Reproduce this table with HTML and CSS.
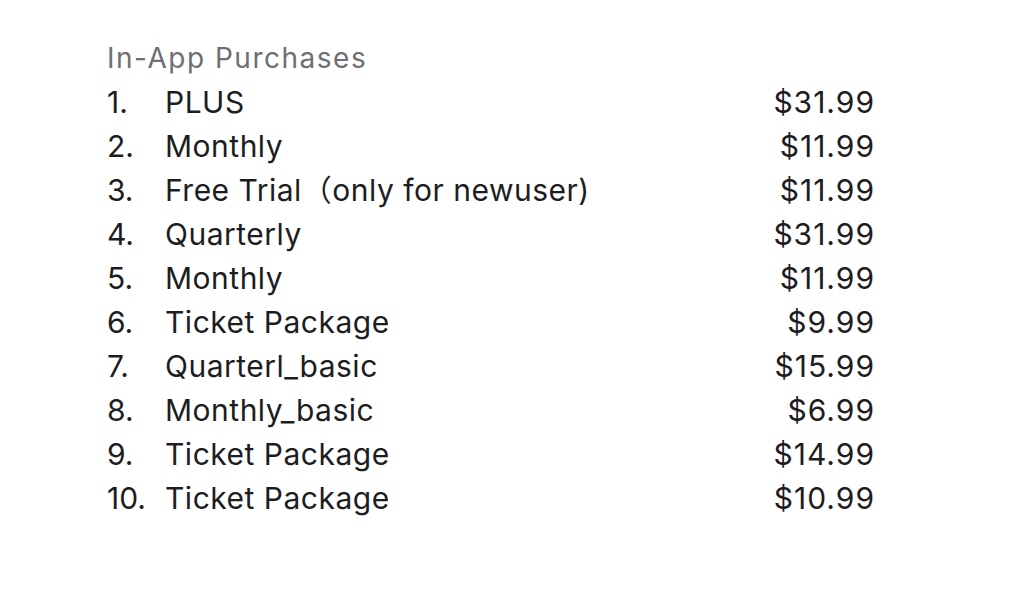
FILE: index.html
```html
<!DOCTYPE html>
<html>
<head>
<meta charset="utf-8">
<link rel="stylesheet" href="styles.css">
</head>
<body>
<div class="panel">
  <div class="title">In-App Purchases</div>
  <ol class="list">
    <li class="row"><span class="num">1.</span><span class="name">PLUS</span><span class="price">$31.99</span></li>
    <li class="row"><span class="num">2.</span><span class="name">Monthly</span><span class="price">$11.99</span></li>
    <li class="row"><span class="num">3.</span><span class="name">Free Trial（only for newuser)</span><span class="price">$11.99</span></li>
    <li class="row"><span class="num">4.</span><span class="name">Quarterly</span><span class="price">$31.99</span></li>
    <li class="row"><span class="num">5.</span><span class="name">Monthly</span><span class="price">$11.99</span></li>
    <li class="row"><span class="num">6.</span><span class="name">Ticket Package</span><span class="price">$9.99</span></li>
    <li class="row"><span class="num">7.</span><span class="name">Quarterl_basic</span><span class="price">$15.99</span></li>
    <li class="row"><span class="num">8.</span><span class="name">Monthly_basic</span><span class="price">$6.99</span></li>
    <li class="row"><span class="num">9.</span><span class="name">Ticket Package</span><span class="price">$14.99</span></li>
    <li class="row"><span class="num">10.</span><span class="name">Ticket Package</span><span class="price">$10.99</span></li>
  </ol>
</div>
</body>
</html>
```
FILE: styles.css
```css
html, body {
  margin: 0;
  padding: 0;
  background: #ffffff;
}
body {
  font-family: Inter, "Noto Sans CJK SC", sans-serif;
  color: #1d1d1f;
}
.panel {
  width: 767px;
  padding: 36px 0 0 107px;
}
.title {
  font-size: 28px;
  line-height: 44px;
  letter-spacing: 1.5px;
  color: #6e6e73;
}
.list {
  list-style: none;
  margin: 0;
  padding: 0;
}
.row {
  display: grid;
  grid-template-columns: 58px 1fr auto;
  font-size: 30px;
  line-height: 44px;
  letter-spacing: 0.5px;
}
.num {
  letter-spacing: 0;
}
.price {
  text-align: right;
  letter-spacing: 1px;
  margin-right: -1px;
}
```
